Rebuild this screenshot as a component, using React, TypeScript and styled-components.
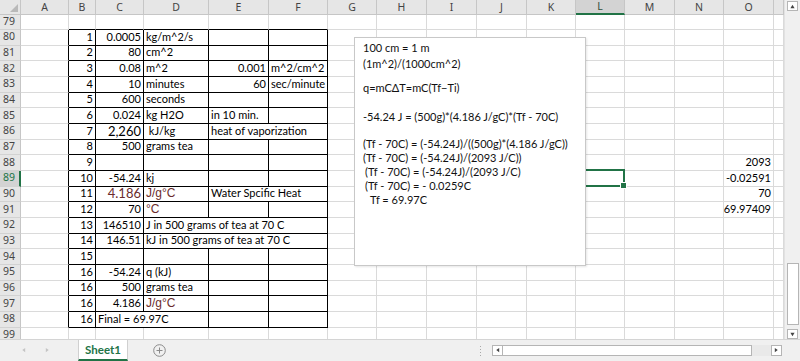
import React from 'react';
import styled, { createGlobalStyle } from 'styled-components';

const GlobalStyle = createGlobalStyle`
  html, body {
    margin: 0;
    padding: 0;
    background: #fff;
  }
  body {
    font-family: 'Lato', 'Liberation Sans', sans-serif;
  }
`;

const GREEN = '#217346';
const GRID = '#dadada';
const MAROON = '#6b2c2c';

const COLS = ['A', 'B', 'C', 'D', 'E', 'F', 'G', 'H', 'I', 'J', 'K', 'L', 'M', 'N', 'O', ''];
const WIDTHS = [48, 27, 48, 65, 60, 59, 49, 50, 50, 50, 49, 49, 50, 49, 50, 10];

type Kind = 'big' | 'unit';
type CellDef = { t?: string; r?: boolean; span?: number; kind?: Kind; maroon?: boolean };

// columns B..F of the bordered block
const TABLE: Record<number, CellDef[]> = {
  80: [{ t: '1', r: true }, { t: '0.0005', r: true }, { t: 'kg/m^2/s' }, {}, {}],
  81: [{ t: '2', r: true }, { t: '80', r: true }, { t: 'cm^2' }, {}, {}],
  82: [{ t: '3', r: true }, { t: '0.08', r: true }, { t: 'm^2' }, { t: '0.001', r: true }, { t: 'm^2/cm^2' }],
  83: [{ t: '4', r: true }, { t: '10', r: true }, { t: 'minutes' }, { t: '60', r: true }, { t: 'sec/minute' }],
  84: [{ t: '5', r: true }, { t: '600', r: true }, { t: 'seconds' }, {}, {}],
  85: [{ t: '6', r: true }, { t: '0.024', r: true }, { t: 'kg H2O' }, { t: 'in 10 min.' }, {}],
  86: [{ t: '7', r: true }, { t: '2,260', r: true, kind: 'big' }, { t: '\u00a0kJ/kg' }, { t: 'heat of vaporization', span: 2 }],
  87: [{ t: '8', r: true }, { t: '500', r: true }, { t: 'grams tea' }, {}, {}],
  88: [{ t: '9', r: true }, {}, {}, {}, {}],
  89: [{ t: '10', r: true }, { t: '-54.24', r: true }, { t: 'kj' }, {}, {}],
  90: [
    { t: '11', r: true },
    { t: '4.186', r: true, kind: 'big', maroon: true },
    { t: 'J/g°C', kind: 'unit', maroon: true },
    { t: 'Water Spcific Heat', span: 2 },
  ],
  91: [{ t: '12', r: true }, { t: '70', r: true }, { t: '°C', kind: 'unit', maroon: true }, {}, {}],
  92: [{ t: '13', r: true }, { t: '146510', r: true }, { t: 'J in 500 grams of tea at 70 C', span: 3 }],
  93: [{ t: '14', r: true }, { t: '146.51', r: true }, { t: 'kJ in 500 grams of tea at 70 C', span: 3 }],
  94: [{ t: '15', r: true }, {}, {}, {}, {}],
  95: [{ t: '16', r: true }, { t: '-54.24', r: true }, { t: 'q (kJ)' }, {}, {}],
  96: [{ t: '16', r: true }, { t: '500', r: true }, { t: 'grams tea' }, {}, {}],
  97: [{ t: '16', r: true }, { t: '4.186', r: true }, { t: 'J/g°C', kind: 'unit', maroon: true }, {}, {}],
  98: [{ t: '16', r: true }, { t: 'Final = 69.97C', span: 2 }, {}, {}],
};

const COL_O: Record<number, string> = {
  88: '2093',
  89: '-0.02591',
  90: '70',
  91: '69.97409',
};

const NOTE_LINES: { text: string; gap: number; indent: number }[] = [
  { text: '100 cm = 1 m', gap: 0, indent: 0 },
  { text: '(1m^2)/(1000cm^2)', gap: 1.5, indent: 0 },
  { text: 'q=mCΔT=mC(Tf−Ti)', gap: 10, indent: 0 },
  { text: '-54.24 J = (500g)*(4.186 J/gC)*(Tf - 70C)', gap: 15.5, indent: 0 },
  { text: '(Tf - 70C) = (-54.24J)/((500g)*(4.186 J/gC))', gap: 13.3, indent: 0 },
  { text: '(Tf - 70C) = (-54.24J)/(2093 J/C))', gap: 0, indent: 0 },
  { text: '(Tf - 70C) = (-54.24J)/(2093 J/C)', gap: 0, indent: 2 },
  { text: '(Tf - 70C) = - 0.0259C', gap: 0, indent: 2 },
  { text: 'Tf = 69.97C', gap: 0, indent: 7 },
];

const Window = styled.div`
  width: 800px;
  height: 361px;
  display: flex;
  flex-direction: column;
  overflow: hidden;
  background: #fff;
`;

const Body = styled.div`
  display: flex;
  height: 339px;
`;

const Sheet = styled.div`
  position: relative;
  width: 784px;
  height: 339px;
  overflow: hidden;
  display: grid;
  grid-template-columns: 21px ${WIDTHS.map((w) => `${w}px`).join(' ')};
  grid-template-rows: 14.5px repeat(21, 15.667px);
`;

const Corner = styled.div`
  position: relative;
  background: #e6e6e6;
  border-right: 1px solid #c6c6c6;
  border-bottom: 1px solid #c6c6c6;
  box-sizing: border-box;

  &::after {
    content: '';
    position: absolute;
    right: 2px;
    bottom: 2px;
    border-left: 8px solid transparent;
    border-bottom: 8px solid #b9b9b9;
  }
`;

const ColHead = styled.div<{ $active?: boolean }>`
  box-sizing: border-box;
  display: flex;
  align-items: center;
  justify-content: center;
  background: ${(p) => (p.$active ? '#d3d3d3' : '#e6e6e6')};
  border-right: 1px solid #c6c6c6;
  border-bottom: ${(p) => (p.$active ? `2px solid ${GREEN}` : '1px solid #c6c6c6')};
  font-family: 'Noto Sans', 'Liberation Sans', sans-serif;
  font-size: 10.5px;
  color: ${(p) => (p.$active ? '#2f4f3a' : '#444')};
`;

const RowHead = styled.div<{ $active?: boolean }>`
  box-sizing: border-box;
  display: flex;
  align-items: center;
  padding: 0 0 2px 3px;
  background: ${(p) => (p.$active ? '#d3d3d3' : '#e6e6e6')};
  border-right: ${(p) => (p.$active ? `2px solid ${GREEN}` : '1px solid #c6c6c6')};
  border-bottom: 1px solid #d2d2d2;
  font-family: 'Noto Sans', 'Liberation Sans', sans-serif;
  font-size: 10.5px;
  color: ${(p) => (p.$active ? GREEN : '#444')};
`;

const Cell = styled.div<{
  $span?: number;
  $right?: boolean;
  $edgeRight?: string;
  $edgeBottom?: string;
  $kind?: Kind;
  $maroon?: boolean;
  $selected?: boolean;
}>`
  position: relative;
  grid-column: span ${(p) => p.$span ?? 1};
  box-sizing: border-box;
  display: flex;
  align-items: flex-end;
  justify-content: ${(p) => (p.$right ? 'flex-end' : 'flex-start')};
  padding: 0 2px 1px 2px;
  border-right: 1px solid ${(p) => p.$edgeRight ?? GRID};
  border-bottom: 1px solid ${(p) => p.$edgeBottom ?? GRID};
  white-space: nowrap;
  font-family: ${(p) => (p.$kind === 'unit' ? "'Liberation Sans', Arial, sans-serif" : "'Lato', 'Liberation Sans', sans-serif")};
  font-size: ${(p) => (p.$kind === 'big' ? '13px' : p.$kind === 'unit' ? '12px' : '11px')};
  line-height: 14px;
  color: ${(p) => (p.$maroon ? MAROON : '#000')};

  ${(p) =>
    p.$selected &&
    `
    &::after {
      content: '';
      position: absolute;
      left: -2px;
      top: -2px;
      right: -1px;
      bottom: -1px;
      border: 2px solid ${GREEN};
    }
    &::before {
      content: '';
      position: absolute;
      right: -3px;
      bottom: -3px;
      width: 5px;
      height: 5px;
      background: ${GREEN};
      border: 1px solid #fff;
      z-index: 1;
    }
  `}
`;

const TextBox = styled.div`
  position: absolute;
  left: 354px;
  top: 37px;
  width: 232px;
  height: 229px;
  box-sizing: border-box;
  padding: 3px 0 0 8px;
  background: #fff;
  border: 1px solid #c8c8c8;
  box-shadow: 1px 1px 2px rgba(0, 0, 0, 0.1);
  z-index: 2;
  font-family: 'Lato', 'Liberation Sans', sans-serif;
  font-size: 11px;
  color: #111;
`;

const NoteLine = styled.div<{ $gap: number; $indent: number }>`
  margin-top: ${(p) => p.$gap}px;
  padding-left: ${(p) => p.$indent}px;
  line-height: 14px;
  white-space: nowrap;
`;

const VScroll = styled.div`
  width: 16px;
  box-sizing: border-box;
  display: flex;
  flex-direction: column;
  align-items: center;
  padding: 1px 0 0 0;
  background: #f0f0f0;
  border-left: 1px solid #e2e2e2;
`;

const ArrowBtn = styled.div`
  width: 11px;
  height: 10px;
  box-sizing: border-box;
  display: flex;
  align-items: center;
  justify-content: center;
  background: #fff;
  border: 1px solid #b5b5b5;
`;

const VTrack = styled.div`
  flex: 1;
  display: flex;
  flex-direction: column;
  justify-content: flex-end;
  padding-bottom: 4px;
`;

const VThumb = styled.div`
  width: 12px;
  height: 62px;
  box-sizing: border-box;
  background: #fff;
  border: 1px solid #b5b5b5;
`;

const TabBar = styled.div`
  height: 22px;
  box-sizing: border-box;
  display: flex;
  align-items: center;
  background: #f0f0f0;
  border-top: 1px solid #d4d4d4;
`;

const NavArrows = styled.div`
  display: flex;
  align-items: center;
  gap: 19px;
  padding-left: 21px;
  width: 57px;
  box-sizing: border-box;
`;

const SheetTab = styled.div`
  width: 50px;
  height: 21px;
  box-sizing: border-box;
  align-self: flex-start;
  display: flex;
  align-items: center;
  justify-content: center;
  background: #fff;
  border-left: 1px solid #d0d0d0;
  border-right: 1px solid #d0d0d0;
  border-bottom: 2px solid ${GREEN};
  font-family: 'Lato', 'Liberation Sans', sans-serif;
  font-weight: 700;
  font-size: 11.5px;
  color: ${GREEN};
  margin-left: 21px;
`;

const AddSheet = styled.div`
  margin-left: 25px;
  display: flex;
  align-items: center;
`;

const Splitter = styled.div`
  margin-left: 314px;
  display: flex;
  flex-direction: column;
  gap: 2px;

  span {
    width: 1px;
    height: 1px;
    background: #a8a8a8;
  }
`;

const HScroll = styled.div`
  margin-left: 11px;
  width: 290px;
  height: 11px;
  display: flex;
  align-items: stretch;
`;

const HArrow = styled.div`
  width: 11px;
  box-sizing: border-box;
  display: flex;
  align-items: center;
  justify-content: center;
  background: #fff;
  border: 1px solid #b5b5b5;
`;

const HThumb = styled.div`
  width: 249px;
  box-sizing: border-box;
  background: #fff;
  border: 1px solid #b5b5b5;
  border-left: none;
`;

const HTrack = styled.div`
  flex: 1;
  background: #e9e9e9;
`;

const Tri = ({ dir, color = '#444', size = 5 }: { dir: 'up' | 'down' | 'left' | 'right'; color?: string; size?: number }) => {
  const paths = {
    up: '0,5 2.5,1 5,5',
    down: '0,1 2.5,5 5,1',
    left: '4.5,0 1,2.5 4.5,5',
    right: '0.5,0 4,2.5 0.5,5',
  };
  return (
    <svg width={size} height={size} viewBox="0 0 5 6">
      <polygon points={paths[dir]} fill={color} />
    </svg>
  );
};

const renderRow = (row: number) => {
  const inBlock = row >= 80 && row <= 98;
  const cells: React.ReactNode[] = [];

  cells.push(<Cell key="A" $edgeRight={inBlock ? '#000' : undefined} />);

  if (inBlock) {
    TABLE[row].forEach((c, i) => (
      cells.push(
        <Cell
          key={`t${i}`}
          $span={c.span}
          $right={c.r}
          $kind={c.kind}
          $maroon={c.maroon}
          $edgeRight="#000"
          $edgeBottom="#000"
        >
          {c.t}
        </Cell>,
      )
    ));
  } else {
    for (let i = 0; i < 5; i++) {
      cells.push(<Cell key={`b${i}`} $edgeBottom={row === 79 ? '#000' : undefined} />);
    }
  }

  COLS.slice(6).forEach((col, i) => {
    cells.push(
      <Cell key={`g${i}`} $right={col === 'O'} $selected={col === 'L' && row === 89}>
        {col === 'O' ? COL_O[row] : null}
      </Cell>,
    );
  });

  return cells;
};

const App: React.FC = () => {
  const rows = Array.from({ length: 21 }, (_, i) => 79 + i);

  return (
    <>
      <GlobalStyle />
      <Window>
        <Body>
          <Sheet>
            <Corner />
            {COLS.map((c, i) => (
              <ColHead key={i} $active={c === 'L'}>
                {c}
              </ColHead>
            ))}
            {rows.map((r) => (
              <React.Fragment key={r}>
                <RowHead $active={r === 89}>{r}</RowHead>
                {renderRow(r)}
              </React.Fragment>
            ))}
            <TextBox>
              {NOTE_LINES.map((l, i) => (
                <NoteLine key={i} $gap={l.gap} $indent={l.indent}>
                  {l.text}
                </NoteLine>
              ))}
            </TextBox>
          </Sheet>
          <VScroll>
            <ArrowBtn>
              <Tri dir="up" />
            </ArrowBtn>
            <VTrack>
              <VThumb />
            </VTrack>
            <ArrowBtn>
              <Tri dir="down" />
            </ArrowBtn>
          </VScroll>
        </Body>
        <TabBar>
          <NavArrows>
            <Tri dir="left" color="#c4c4c4" />
            <Tri dir="right" color="#c4c4c4" />
          </NavArrows>
          <SheetTab>Sheet1</SheetTab>
          <AddSheet>
            <svg width="13" height="13" viewBox="0 0 13 13">
              <circle cx="6.5" cy="6.5" r="5.8" fill="none" stroke="#8a8a8a" strokeWidth="1" />
              <path d="M6.5 3.5v6M3.5 6.5h6" stroke="#8a8a8a" strokeWidth="1" />
            </svg>
          </AddSheet>
          <Splitter>
            <span />
            <span />
            <span />
            <span />
          </Splitter>
          <HScroll>
            <HArrow>
              <Tri dir="left" />
            </HArrow>
            <HThumb />
            <HTrack />
            <HArrow>
              <Tri dir="right" />
            </HArrow>
          </HScroll>
        </TabBar>
      </Window>
    </>
  );
};

export default App;
